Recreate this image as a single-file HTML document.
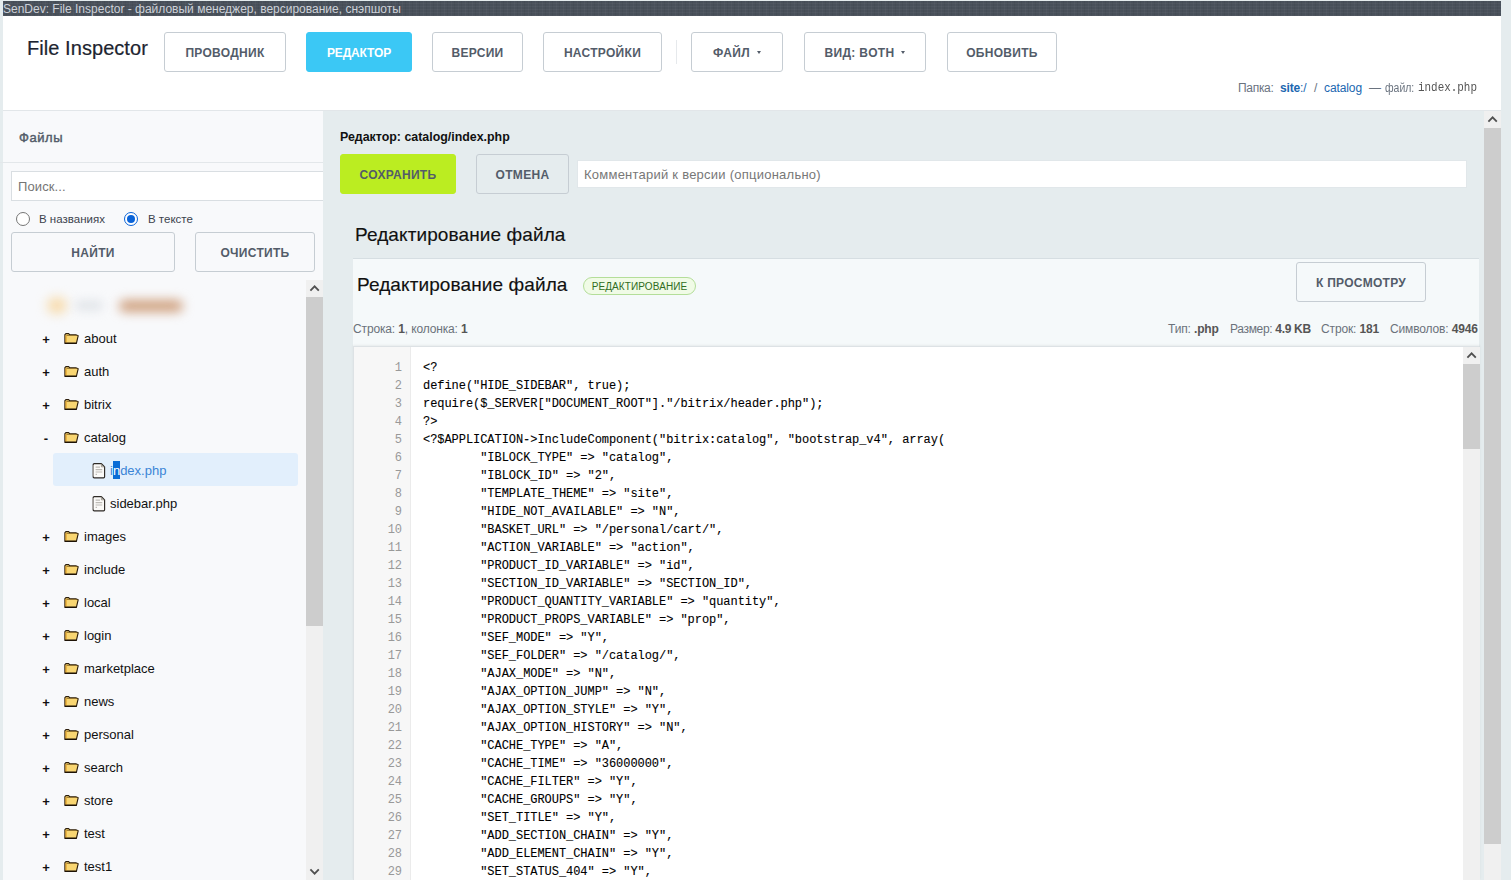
<!DOCTYPE html>
<html lang="ru"><head><meta charset="utf-8"><title>SenDev: File Inspector</title>
<style>
*{box-sizing:border-box}
html,body{margin:0;padding:0}
body{width:1511px;height:880px;overflow:hidden;position:relative;background:#e5ecee;font-family:"Liberation Sans",sans-serif;color:#000}
.abs{position:absolute}
#titlebar{left:3px;top:1px;width:1498px;height:15px;background:#48505a;color:#cdd1d8;font-size:12px;line-height:15px;white-space:nowrap;overflow:hidden;
 background-image:repeating-linear-gradient(90deg,rgba(255,255,255,.03) 0 1px,transparent 1px 3px,rgba(0,0,0,.05) 3px 4px,transparent 4px 7px),repeating-linear-gradient(0deg,rgba(255,255,255,.03) 0 1px,transparent 1px 3px)}
#titlebar span{position:absolute;left:0;top:1px}
#hdr{left:3px;top:16px;width:1498px;height:95px;background:#fff;border-bottom:1px solid #e2e6e9}
#brand{left:27px;top:35px;font-size:20px;line-height:26px;color:#1d2430;white-space:nowrap;letter-spacing:.06px;-webkit-text-stroke:.2px #1d2430}
.btn{position:absolute;height:40px;border:1px solid #c6cdd3;border-radius:3px;background:#fff;color:#535c69;font-weight:bold;font-size:12px;line-height:40px;text-align:center;text-transform:uppercase;white-space:nowrap;letter-spacing:.3px}
.btn.pri{background:#3bc8f5;border-color:#3bc8f5;color:#fff}
.btn.suc{background:#bbed21;border-color:#bbed21;color:#535c69}
.btn.lt{background:transparent}
.caret{display:inline-block;width:0;height:0;border-left:2.5px solid transparent;border-right:2.5px solid transparent;border-top:3px solid #535c69;vertical-align:middle;margin-left:7px;position:relative;top:-1px}
#sep{left:676px;top:40px;width:1px;height:24px;background:#e6e9ec}
.cr{position:absolute;top:80px;font-size:12px;line-height:16px;color:#6a737f;white-space:nowrap}
.cr.a{color:#2067b0}
.cr.m{font-family:"Liberation Mono",monospace;font-size:12px;color:#555;transform:scaleX(.91);transform-origin:0 50%}
#side{left:3px;top:111px;width:320px;height:769px;background:#f8f9fb}
#sidehead{left:19px;top:129px;font-size:13px;line-height:18px;color:#535c69;letter-spacing:.55px;-webkit-text-stroke:.45px #535c69}
#sideline{left:0;top:162px;width:323px;height:1px;background:#e3e7ea}
#search{left:11px;top:171px;width:312px;height:30px;background:#fff;border:1px solid #d9dee2;border-right:none;font-size:13px;line-height:30px;padding-left:6px;color:#757575;letter-spacing:.1px}
.radio{width:14px;height:14px;border-radius:50%;border:1px solid #767676;background:#fff}
.radio.on{border:1.5px solid #0a63d8}
.radio.on::after{content:"";position:absolute;left:1.5px;top:1.5px;width:8px;height:8px;border-radius:50%;background:#0a63d8}
.rl{font-size:11.5px;line-height:16px;color:#3c434d;white-space:nowrap}
#tree{left:3px;top:280px;width:303px;height:600px;overflow:hidden}
.row{position:absolute;left:0;height:33px;width:303px;font-size:13px;line-height:33px;color:#111;white-space:nowrap}
.row .pm{position:absolute;left:38px;top:1px;width:10px;text-align:center;font-size:13px;font-weight:bold;color:#111}
.row .fi{position:absolute;left:60px;top:10px}
.row .fl{position:absolute;left:89px;top:9px}
.row .nm{position:absolute;left:81px;top:0}
.row.f .nm{left:107px}
.row.sel::before{content:"";position:absolute;left:50px;top:-1px;width:245px;height:33px;background:#e2effc;border-radius:3px}
.row.sel .nm{color:#3a84d6}
.row.sel .hl{background:#0a6cd6;color:#fff;padding:2px 0 1px}
.sb{background:#f0f0f0}
.sb .th{position:absolute;left:0;width:100%;background:#cdcdcd}
.sb svg{position:absolute;left:0}
#main h{display:block}
#edtitle{left:340px;top:129px;font-size:12.4px;line-height:16px;font-weight:bold;color:#111;white-space:nowrap}
#comment{left:577px;top:160px;width:890px;height:28px;background:#fff;border:1px solid #e1e7ea;font-size:13px;line-height:27px;padding-left:6px;color:#777;white-space:nowrap;letter-spacing:.24px}
.h2{font-size:19px;line-height:26px;color:#111;white-space:nowrap;letter-spacing:.1px;-webkit-text-stroke:.15px #111}
#panel{left:353px;top:258px;width:1126px;height:622px;background:#f5f9fa;border-top:1px solid #d6dee2}
#badge{left:583px;top:277px;width:113px;height:18px;border:1px solid #b4de99;background:#f0fbe6;border-radius:9px;font-size:10px;line-height:17px;text-align:center;color:#2f6d22;white-space:nowrap;letter-spacing:.1px}
.info{font-size:12px;line-height:16px;color:#6b727a;white-space:nowrap;letter-spacing:-.14px}
.info b{color:#555}
#editor{left:353px;top:346px;width:1127px;height:534px;background:#fff;border:1px solid #dde2e5;border-right-color:#d3d9dd;border-bottom:none;box-shadow:0 -1px 2px rgba(0,0,0,.06)}
#gutter{left:0;top:0;width:57px;height:100%;background:#f7f7f7;border-right:1px solid #ebebeb}
.ln{position:absolute;left:0;width:48px;text-align:right;font-family:"Liberation Mono",monospace;font-size:12px;line-height:18px;color:#999;letter-spacing:-.05px}
.cl{position:absolute;left:69px;font-family:"Liberation Mono",monospace;font-size:12px;line-height:18px;color:#000;white-space:pre;letter-spacing:-.05px;tab-size:8;-webkit-text-stroke:.1px #000}
</style></head><body>

<div id="titlebar" class="abs"><span>SenDev: File Inspector - файловый менеджер, версирование, снэпшоты</span></div>
<div id="hdr" class="abs"></div>
<div id="brand" class="abs">File Inspector</div>
<div class="btn " style="left:164px;top:32px;width:122px">Проводник</div>
<div class="btn pri" style="left:306px;top:32px;width:106px"><span style="letter-spacing:-.15px">Редактор</span></div>
<div class="btn " style="left:432px;top:32px;width:91px">Версии</div>
<div class="btn " style="left:543px;top:32px;width:119px">Настройки</div>
<div class="btn " style="left:691px;top:32px;width:92px">Файл<i class="caret"></i></div>
<div class="btn " style="left:804px;top:32px;width:122px">Вид: both<i class="caret"></i></div>
<div class="btn " style="left:947px;top:32px;width:110px">Обновить</div>
<div id="sep" class="abs"></div>
<span class="cr" style="left:1238px;letter-spacing:-.3px">Папка:</span><span class="cr a" style="left:1280px;letter-spacing:-.15px"><b>site</b>:/</span><span class="cr" style="left:1314px">/</span><span class="cr a" style="left:1324px;letter-spacing:-.1px">catalog</span><span class="cr" style="left:1369px">—</span><span class="cr" style="left:1384.5px;transform:scaleX(.87);transform-origin:0 50%">файл:</span><span class="cr m" style="left:1418px">index.php</span>
<div id="side" class="abs"></div>
<div id="sidehead" class="abs">Файлы</div>
<div id="sideline" class="abs"></div>
<div id="search" class="abs">Поиск...</div>
<div class="abs radio" style="left:16px;top:212px"></div><div class="abs rl" style="left:39px;top:211px">В названиях</div>
<div class="abs radio on" style="left:124px;top:212px"></div><div class="abs rl" style="left:148px;top:211px">В тексте</div>
<div class="btn lt" style="left:11px;top:232px;width:164px">Найти</div>
<div class="btn lt" style="left:195px;top:232px;width:120px">Очистить</div>
<div id="tree" class="abs">
<div class="abs" style="left:45px;top:18px;width:18px;height:15px;background:#f7d8a4;border-radius:6px;filter:blur(6px)"></div>
<div class="abs" style="left:72px;top:20px;width:28px;height:11px;background:#e3e6ea;border-radius:5px;filter:blur(5px)"></div>
<div class="abs" style="left:116px;top:20px;width:64px;height:12px;background:#cfa07e;border-radius:6px;filter:blur(5.5px)"></div>
<div class="row" style="top:42px"><span class="pm">+</span><svg class="fi" width="16" height="13" viewBox="0 0 16 13"><path d="M1.9 11.3 V2.7 L2.9 1.6 H5.6 L6.6 2.7 H12.8 L15.2 3.7 L13.4 11.3 Z" fill="#f9d672" stroke="#2b1d0c" stroke-width="1.15" stroke-linejoin="round"/><path d="M2.5 3 H3.6 V10.7 H2.5 Z" fill="#e2a127"/><path d="M3.6 3.5 H14.6" stroke="#7a5a1c" stroke-width=".7" fill="none"/><path d="M1.9 11.3 H13.4" stroke="#1d1206" stroke-width="1.3" fill="none"/></svg><span class="nm">about</span></div>
<div class="row" style="top:75px"><span class="pm">+</span><svg class="fi" width="16" height="13" viewBox="0 0 16 13"><path d="M1.9 11.3 V2.7 L2.9 1.6 H5.6 L6.6 2.7 H12.8 L15.2 3.7 L13.4 11.3 Z" fill="#f9d672" stroke="#2b1d0c" stroke-width="1.15" stroke-linejoin="round"/><path d="M2.5 3 H3.6 V10.7 H2.5 Z" fill="#e2a127"/><path d="M3.6 3.5 H14.6" stroke="#7a5a1c" stroke-width=".7" fill="none"/><path d="M1.9 11.3 H13.4" stroke="#1d1206" stroke-width="1.3" fill="none"/></svg><span class="nm">auth</span></div>
<div class="row" style="top:108px"><span class="pm">+</span><svg class="fi" width="16" height="13" viewBox="0 0 16 13"><path d="M1.9 11.3 V2.7 L2.9 1.6 H5.6 L6.6 2.7 H12.8 L15.2 3.7 L13.4 11.3 Z" fill="#f9d672" stroke="#2b1d0c" stroke-width="1.15" stroke-linejoin="round"/><path d="M2.5 3 H3.6 V10.7 H2.5 Z" fill="#e2a127"/><path d="M3.6 3.5 H14.6" stroke="#7a5a1c" stroke-width=".7" fill="none"/><path d="M1.9 11.3 H13.4" stroke="#1d1206" stroke-width="1.3" fill="none"/></svg><span class="nm">bitrix</span></div>
<div class="row" style="top:141px"><span class="pm">-</span><svg class="fi" width="16" height="13" viewBox="0 0 16 13"><path d="M1.9 11.3 V2.7 L2.9 1.6 H5.6 L6.6 2.7 H12.8 L15.2 3.7 L13.4 11.3 Z" fill="#f9d672" stroke="#2b1d0c" stroke-width="1.15" stroke-linejoin="round"/><path d="M2.5 3 H3.6 V10.7 H2.5 Z" fill="#e2a127"/><path d="M3.6 3.5 H14.6" stroke="#7a5a1c" stroke-width=".7" fill="none"/><path d="M1.9 11.3 H13.4" stroke="#1d1206" stroke-width="1.3" fill="none"/></svg><span class="nm">catalog</span></div>
<div class="row f sel" style="top:174px"><svg class="fl" width="14" height="16" viewBox="0 0 14 16"><path d="M1.2 1.6 Q1.2 0.6 2.2 0.6 H9.4 L12.6 3.8 V13.8 Q12.6 14.8 11.6 14.8 H2.2 Q1.2 14.8 1.2 13.8 Z" fill="#fbfaf8" stroke="#2e2a26" stroke-width="1.15" stroke-linejoin="round"/><path d="M1.2 2 V13.6" stroke="#a9a7a3" stroke-width="1.3"/><path d="M9.4 0.8 V3.8 H12.4" fill="none" stroke="#8d8579" stroke-width=".8"/><path d="M3.6 4.2 H8 M3.6 6.6 H10.2 M3.6 9 H10.2 M3.6 11.4 H5" stroke="#bdbab5" stroke-width="1.2"/></svg><span class="nm">i<span class="hl">n</span>dex.php</span></div>
<div class="row f" style="top:207px"><svg class="fl" width="14" height="16" viewBox="0 0 14 16"><path d="M1.2 1.6 Q1.2 0.6 2.2 0.6 H9.4 L12.6 3.8 V13.8 Q12.6 14.8 11.6 14.8 H2.2 Q1.2 14.8 1.2 13.8 Z" fill="#fbfaf8" stroke="#2e2a26" stroke-width="1.15" stroke-linejoin="round"/><path d="M1.2 2 V13.6" stroke="#a9a7a3" stroke-width="1.3"/><path d="M9.4 0.8 V3.8 H12.4" fill="none" stroke="#8d8579" stroke-width=".8"/><path d="M3.6 4.2 H8 M3.6 6.6 H10.2 M3.6 9 H10.2 M3.6 11.4 H5" stroke="#bdbab5" stroke-width="1.2"/></svg><span class="nm">sidebar.php</span></div>
<div class="row" style="top:240px"><span class="pm">+</span><svg class="fi" width="16" height="13" viewBox="0 0 16 13"><path d="M1.9 11.3 V2.7 L2.9 1.6 H5.6 L6.6 2.7 H12.8 L15.2 3.7 L13.4 11.3 Z" fill="#f9d672" stroke="#2b1d0c" stroke-width="1.15" stroke-linejoin="round"/><path d="M2.5 3 H3.6 V10.7 H2.5 Z" fill="#e2a127"/><path d="M3.6 3.5 H14.6" stroke="#7a5a1c" stroke-width=".7" fill="none"/><path d="M1.9 11.3 H13.4" stroke="#1d1206" stroke-width="1.3" fill="none"/></svg><span class="nm">images</span></div>
<div class="row" style="top:273px"><span class="pm">+</span><svg class="fi" width="16" height="13" viewBox="0 0 16 13"><path d="M1.9 11.3 V2.7 L2.9 1.6 H5.6 L6.6 2.7 H12.8 L15.2 3.7 L13.4 11.3 Z" fill="#f9d672" stroke="#2b1d0c" stroke-width="1.15" stroke-linejoin="round"/><path d="M2.5 3 H3.6 V10.7 H2.5 Z" fill="#e2a127"/><path d="M3.6 3.5 H14.6" stroke="#7a5a1c" stroke-width=".7" fill="none"/><path d="M1.9 11.3 H13.4" stroke="#1d1206" stroke-width="1.3" fill="none"/></svg><span class="nm">include</span></div>
<div class="row" style="top:306px"><span class="pm">+</span><svg class="fi" width="16" height="13" viewBox="0 0 16 13"><path d="M1.9 11.3 V2.7 L2.9 1.6 H5.6 L6.6 2.7 H12.8 L15.2 3.7 L13.4 11.3 Z" fill="#f9d672" stroke="#2b1d0c" stroke-width="1.15" stroke-linejoin="round"/><path d="M2.5 3 H3.6 V10.7 H2.5 Z" fill="#e2a127"/><path d="M3.6 3.5 H14.6" stroke="#7a5a1c" stroke-width=".7" fill="none"/><path d="M1.9 11.3 H13.4" stroke="#1d1206" stroke-width="1.3" fill="none"/></svg><span class="nm">local</span></div>
<div class="row" style="top:339px"><span class="pm">+</span><svg class="fi" width="16" height="13" viewBox="0 0 16 13"><path d="M1.9 11.3 V2.7 L2.9 1.6 H5.6 L6.6 2.7 H12.8 L15.2 3.7 L13.4 11.3 Z" fill="#f9d672" stroke="#2b1d0c" stroke-width="1.15" stroke-linejoin="round"/><path d="M2.5 3 H3.6 V10.7 H2.5 Z" fill="#e2a127"/><path d="M3.6 3.5 H14.6" stroke="#7a5a1c" stroke-width=".7" fill="none"/><path d="M1.9 11.3 H13.4" stroke="#1d1206" stroke-width="1.3" fill="none"/></svg><span class="nm">login</span></div>
<div class="row" style="top:372px"><span class="pm">+</span><svg class="fi" width="16" height="13" viewBox="0 0 16 13"><path d="M1.9 11.3 V2.7 L2.9 1.6 H5.6 L6.6 2.7 H12.8 L15.2 3.7 L13.4 11.3 Z" fill="#f9d672" stroke="#2b1d0c" stroke-width="1.15" stroke-linejoin="round"/><path d="M2.5 3 H3.6 V10.7 H2.5 Z" fill="#e2a127"/><path d="M3.6 3.5 H14.6" stroke="#7a5a1c" stroke-width=".7" fill="none"/><path d="M1.9 11.3 H13.4" stroke="#1d1206" stroke-width="1.3" fill="none"/></svg><span class="nm">marketplace</span></div>
<div class="row" style="top:405px"><span class="pm">+</span><svg class="fi" width="16" height="13" viewBox="0 0 16 13"><path d="M1.9 11.3 V2.7 L2.9 1.6 H5.6 L6.6 2.7 H12.8 L15.2 3.7 L13.4 11.3 Z" fill="#f9d672" stroke="#2b1d0c" stroke-width="1.15" stroke-linejoin="round"/><path d="M2.5 3 H3.6 V10.7 H2.5 Z" fill="#e2a127"/><path d="M3.6 3.5 H14.6" stroke="#7a5a1c" stroke-width=".7" fill="none"/><path d="M1.9 11.3 H13.4" stroke="#1d1206" stroke-width="1.3" fill="none"/></svg><span class="nm">news</span></div>
<div class="row" style="top:438px"><span class="pm">+</span><svg class="fi" width="16" height="13" viewBox="0 0 16 13"><path d="M1.9 11.3 V2.7 L2.9 1.6 H5.6 L6.6 2.7 H12.8 L15.2 3.7 L13.4 11.3 Z" fill="#f9d672" stroke="#2b1d0c" stroke-width="1.15" stroke-linejoin="round"/><path d="M2.5 3 H3.6 V10.7 H2.5 Z" fill="#e2a127"/><path d="M3.6 3.5 H14.6" stroke="#7a5a1c" stroke-width=".7" fill="none"/><path d="M1.9 11.3 H13.4" stroke="#1d1206" stroke-width="1.3" fill="none"/></svg><span class="nm">personal</span></div>
<div class="row" style="top:471px"><span class="pm">+</span><svg class="fi" width="16" height="13" viewBox="0 0 16 13"><path d="M1.9 11.3 V2.7 L2.9 1.6 H5.6 L6.6 2.7 H12.8 L15.2 3.7 L13.4 11.3 Z" fill="#f9d672" stroke="#2b1d0c" stroke-width="1.15" stroke-linejoin="round"/><path d="M2.5 3 H3.6 V10.7 H2.5 Z" fill="#e2a127"/><path d="M3.6 3.5 H14.6" stroke="#7a5a1c" stroke-width=".7" fill="none"/><path d="M1.9 11.3 H13.4" stroke="#1d1206" stroke-width="1.3" fill="none"/></svg><span class="nm">search</span></div>
<div class="row" style="top:504px"><span class="pm">+</span><svg class="fi" width="16" height="13" viewBox="0 0 16 13"><path d="M1.9 11.3 V2.7 L2.9 1.6 H5.6 L6.6 2.7 H12.8 L15.2 3.7 L13.4 11.3 Z" fill="#f9d672" stroke="#2b1d0c" stroke-width="1.15" stroke-linejoin="round"/><path d="M2.5 3 H3.6 V10.7 H2.5 Z" fill="#e2a127"/><path d="M3.6 3.5 H14.6" stroke="#7a5a1c" stroke-width=".7" fill="none"/><path d="M1.9 11.3 H13.4" stroke="#1d1206" stroke-width="1.3" fill="none"/></svg><span class="nm">store</span></div>
<div class="row" style="top:537px"><span class="pm">+</span><svg class="fi" width="16" height="13" viewBox="0 0 16 13"><path d="M1.9 11.3 V2.7 L2.9 1.6 H5.6 L6.6 2.7 H12.8 L15.2 3.7 L13.4 11.3 Z" fill="#f9d672" stroke="#2b1d0c" stroke-width="1.15" stroke-linejoin="round"/><path d="M2.5 3 H3.6 V10.7 H2.5 Z" fill="#e2a127"/><path d="M3.6 3.5 H14.6" stroke="#7a5a1c" stroke-width=".7" fill="none"/><path d="M1.9 11.3 H13.4" stroke="#1d1206" stroke-width="1.3" fill="none"/></svg><span class="nm">test</span></div>
<div class="row" style="top:570px"><span class="pm">+</span><svg class="fi" width="16" height="13" viewBox="0 0 16 13"><path d="M1.9 11.3 V2.7 L2.9 1.6 H5.6 L6.6 2.7 H12.8 L15.2 3.7 L13.4 11.3 Z" fill="#f9d672" stroke="#2b1d0c" stroke-width="1.15" stroke-linejoin="round"/><path d="M2.5 3 H3.6 V10.7 H2.5 Z" fill="#e2a127"/><path d="M3.6 3.5 H14.6" stroke="#7a5a1c" stroke-width=".7" fill="none"/><path d="M1.9 11.3 H13.4" stroke="#1d1206" stroke-width="1.3" fill="none"/></svg><span class="nm">test1</span></div>
</div>
<div class="abs sb" style="left:306px;top:280px;width:17px;height:600px"><svg width="17" height="17" viewBox="0 0 17 17" style="top:0"><path d="M4.4 10.6 L8.6 6.3 L12.8 10.6" fill="none" stroke="#505050" stroke-width="1.8"/></svg><div class="th" style="top:17px;height:329px"></div><svg width="17" height="17" viewBox="0 0 17 17" style="bottom:0"><path d="M4.4 6.4 L8.6 10.7 L12.8 6.4" fill="none" stroke="#505050" stroke-width="1.8"/></svg></div>
<div id="edtitle" class="abs">Редактор: catalog/index.php</div>
<div class="btn suc" style="left:340px;top:154px;width:116px">Сохранить</div>
<div class="btn lt" style="left:476px;top:154px;width:93px">Отмена</div>
<div id="comment" class="abs">Комментарий к версии (опционально)</div>
<div class="abs h2" style="left:355px;top:222px">Редактирование файла</div>
<div id="panel" class="abs"></div>
<div class="abs h2" style="left:357px;top:272px">Редактирование файла</div>
<div id="badge" class="abs">РЕДАКТИРОВАНИЕ</div>
<div class="btn lt" style="left:1296px;top:262px;width:130px">К просмотру</div>
<div class="abs info" style="left:353px;top:321px">Строка: <b>1</b>, колонка: <b>1</b></div>
<div class="abs" style="left:1160px;top:321px;width:319px;height:18px;overflow:hidden"><span class="abs info" style="left:8px">Тип: <b>.php</b></span><span class="abs info" style="left:70px;letter-spacing:-.32px">Размер: <b>4.9 KB</b></span><span class="abs info" style="left:161px">Строк: <b>181</b></span><span class="abs info" style="left:230px">Символов: <b>4946</b></span></div>
<div id="editor" class="abs"><div id="gutter" class="abs"></div>
<div class="ln" style="top:12px">1</div><div class="cl" style="top:12px">&lt;?</div>
<div class="ln" style="top:30px">2</div><div class="cl" style="top:30px">define("HIDE_SIDEBAR", true);</div>
<div class="ln" style="top:48px">3</div><div class="cl" style="top:48px">require($_SERVER["DOCUMENT_ROOT"]."/bitrix/header.php");</div>
<div class="ln" style="top:66px">4</div><div class="cl" style="top:66px">?&gt;</div>
<div class="ln" style="top:84px">5</div><div class="cl" style="top:84px">&lt;?$APPLICATION-&gt;IncludeComponent("bitrix:catalog", "bootstrap_v4", array(</div>
<div class="ln" style="top:102px">6</div><div class="cl" style="top:102px">	"IBLOCK_TYPE" =&gt; "catalog",</div>
<div class="ln" style="top:120px">7</div><div class="cl" style="top:120px">	"IBLOCK_ID" =&gt; "2",</div>
<div class="ln" style="top:138px">8</div><div class="cl" style="top:138px">	"TEMPLATE_THEME" =&gt; "site",</div>
<div class="ln" style="top:156px">9</div><div class="cl" style="top:156px">	"HIDE_NOT_AVAILABLE" =&gt; "N",</div>
<div class="ln" style="top:174px">10</div><div class="cl" style="top:174px">	"BASKET_URL" =&gt; "/personal/cart/",</div>
<div class="ln" style="top:192px">11</div><div class="cl" style="top:192px">	"ACTION_VARIABLE" =&gt; "action",</div>
<div class="ln" style="top:210px">12</div><div class="cl" style="top:210px">	"PRODUCT_ID_VARIABLE" =&gt; "id",</div>
<div class="ln" style="top:228px">13</div><div class="cl" style="top:228px">	"SECTION_ID_VARIABLE" =&gt; "SECTION_ID",</div>
<div class="ln" style="top:246px">14</div><div class="cl" style="top:246px">	"PRODUCT_QUANTITY_VARIABLE" =&gt; "quantity",</div>
<div class="ln" style="top:264px">15</div><div class="cl" style="top:264px">	"PRODUCT_PROPS_VARIABLE" =&gt; "prop",</div>
<div class="ln" style="top:282px">16</div><div class="cl" style="top:282px">	"SEF_MODE" =&gt; "Y",</div>
<div class="ln" style="top:300px">17</div><div class="cl" style="top:300px">	"SEF_FOLDER" =&gt; "/catalog/",</div>
<div class="ln" style="top:318px">18</div><div class="cl" style="top:318px">	"AJAX_MODE" =&gt; "N",</div>
<div class="ln" style="top:336px">19</div><div class="cl" style="top:336px">	"AJAX_OPTION_JUMP" =&gt; "N",</div>
<div class="ln" style="top:354px">20</div><div class="cl" style="top:354px">	"AJAX_OPTION_STYLE" =&gt; "Y",</div>
<div class="ln" style="top:372px">21</div><div class="cl" style="top:372px">	"AJAX_OPTION_HISTORY" =&gt; "N",</div>
<div class="ln" style="top:390px">22</div><div class="cl" style="top:390px">	"CACHE_TYPE" =&gt; "A",</div>
<div class="ln" style="top:408px">23</div><div class="cl" style="top:408px">	"CACHE_TIME" =&gt; "36000000",</div>
<div class="ln" style="top:426px">24</div><div class="cl" style="top:426px">	"CACHE_FILTER" =&gt; "Y",</div>
<div class="ln" style="top:444px">25</div><div class="cl" style="top:444px">	"CACHE_GROUPS" =&gt; "Y",</div>
<div class="ln" style="top:462px">26</div><div class="cl" style="top:462px">	"SET_TITLE" =&gt; "Y",</div>
<div class="ln" style="top:480px">27</div><div class="cl" style="top:480px">	"ADD_SECTION_CHAIN" =&gt; "Y",</div>
<div class="ln" style="top:498px">28</div><div class="cl" style="top:498px">	"ADD_ELEMENT_CHAIN" =&gt; "Y",</div>
<div class="ln" style="top:516px">29</div><div class="cl" style="top:516px">	"SET_STATUS_404" =&gt; "Y",</div>
<div class="abs sb" style="left:1109px;top:0;width:17px;height:534px"><svg width="17" height="17" viewBox="0 0 17 17" style="top:0"><path d="M4.4 10.6 L8.6 6.3 L12.8 10.6" fill="none" stroke="#505050" stroke-width="1.8"/></svg><div class="th" style="top:17px;height:85px"></div></div>
</div>
<div class="abs sb" style="left:1484px;top:111px;width:17px;height:769px"><svg width="17" height="17" viewBox="0 0 17 17" style="top:0"><path d="M4.4 10.6 L8.6 6.3 L12.8 10.6" fill="none" stroke="#505050" stroke-width="1.8"/></svg><div class="th" style="top:17px;height:716px"></div></div>
</body></html>
